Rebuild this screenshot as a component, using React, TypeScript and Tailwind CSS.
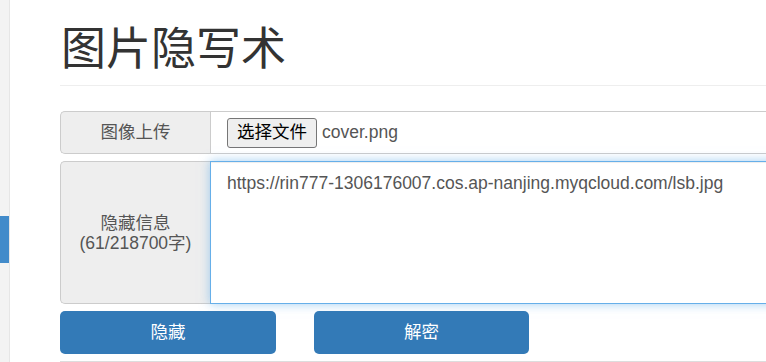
const font = "font-['Liberation_Sans','Noto_Sans_CJK_SC',sans-serif]";

function Sidebar() {
  return (
    <aside className="flex w-[10px] shrink-0 flex-col border-r border-[#e6e6e6] bg-[#f3f3f3] pt-[216px]">
      <div className="h-[47px] w-[9px] bg-[#428bca]"></div>
    </aside>
  );
}

function App() {
  return (
    <div className={`flex h-[362px] w-[766px] overflow-hidden bg-white ${font}`}>
      <Sidebar />
      <main className="w-[900px] shrink-0 pl-[50px]">
        <h1 className="border-b border-[#eee] pb-[8px] pl-[1px] pt-[23px] text-[45px] font-normal leading-[54px] text-[#333]">
          图片隐写术
        </h1>

        <form className="mt-[25px] flex flex-col">
          <div className="flex h-[43px]">
            <label className="flex w-[150px] shrink-0 items-center justify-center rounded-l-[5px] border border-r-0 border-[#ccc] bg-[#eee] text-[17.5px] text-[#555]">
              图像上传
            </label>
            <div className="flex flex-1 items-center border border-[#ccc] pl-[16px]">
              <span className="flex h-[30px] items-center rounded-[3px] border border-[#767676] bg-[#efefef] px-[9px] text-[17.5px] text-black">
                选择文件
              </span>
              <span className="ml-[5px] text-[17.5px] text-[#555]">cover.png</span>
            </div>
          </div>

          <div className="mt-[7px] flex h-[143px]">
            <label className="flex w-[150px] shrink-0 flex-col items-center justify-center rounded-l-[5px] border border-r-0 border-[#ccc] bg-[#eee] text-[17.5px] leading-[20px] text-[#555]">
              <span>隐藏信息</span>
              <span>(61/218700字)</span>
            </label>
            <textarea
              readOnly
              className="flex-1 resize-none border border-[#66afe9] px-[16px] py-[9px] text-[17.5px] leading-[25px] text-[#555] shadow-[inset_0_1px_1px_rgba(0,0,0,0.075),0_0_10px_rgba(102,175,233,0.6)] outline-none"
              value="https://rin777-1306176007.cos.ap-nanjing.myqcloud.com/lsb.jpg"
            />
          </div>

          <div className="mt-[7px] flex border-b border-[#ddd] pb-[7px]">
            <button type="button" className="h-[43px] w-[216px] rounded-[5px] bg-[#337ab7] text-[17.5px] text-white">
              隐藏
            </button>
            <button type="button" className="ml-[38px] h-[43px] w-[215px] rounded-[5px] bg-[#337ab7] text-[17.5px] text-white">
              解密
            </button>
          </div>
        </form>
      </main>
    </div>
  );
}

export default App;
